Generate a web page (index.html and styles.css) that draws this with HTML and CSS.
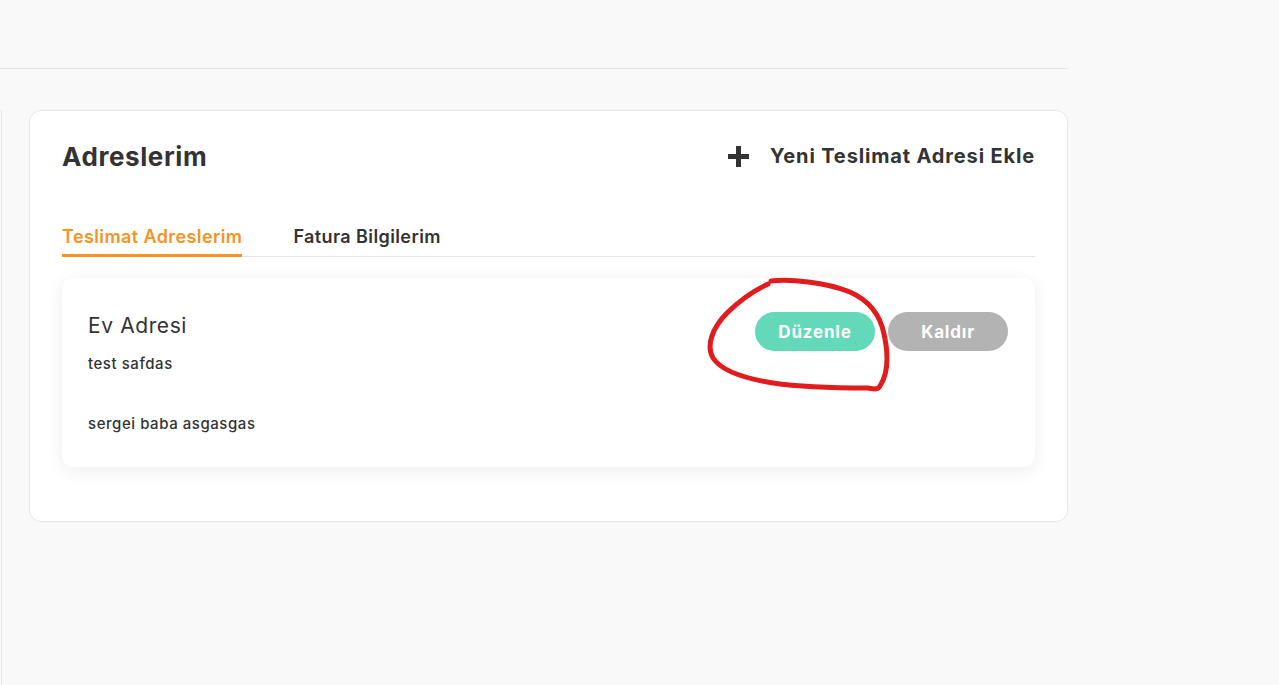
FILE: index.html
```html
<!DOCTYPE html>
<html lang="tr">
<head>
    <meta charset="utf-8">
    <link rel="stylesheet" href="styles.css">
    <title>Adreslerim</title>
</head>
<body>

<div class="topbar"></div>

<div class="layout">
    <aside class="side"></aside>

    <section class="card">
        <div class="card-head">
            <h1>Adreslerim</h1>
            <a class="add-link" href="#">
                <span class="plus"></span>
                Yeni Teslimat Adresi Ekle
            </a>
        </div>

        <div class="tabs">
            <a class="tab active" href="#">Teslimat Adreslerim</a>
            <a class="tab" href="#">Fatura Bilgilerim</a>
        </div>

        <div class="address">
            <div class="address-info">
                <h2>Ev Adresi</h2>
                <p>test safdas</p>
                <p class="owner">sergei baba asgasgas</p>
            </div>
            <div class="address-actions">
                <button class="btn btn-edit">Düzenle</button>
                <button class="btn btn-remove">Kaldır</button>
            </div>
        </div>
    </section>
</div>

<!-- kalem ile çizilmiş işaret -->
<svg class="mark" width="200" height="130" viewBox="700 270 200 130">
    <path d="M771 281 C 790 279, 825 282, 850 292 C 868 300, 880 314, 884 334
             C 888 352, 889 372, 880 386 C 878 390, 874 389, 868 388
             C 840 388, 800 387, 773 383 C 748 379, 722 372, 713 358
             C 706 346, 712 328, 727 313 C 740 300, 755 290, 768 284"
          fill="none" stroke="#e21b1d" stroke-width="5" stroke-linecap="round" stroke-linejoin="round"/>
</svg>

</body>
</html>
```

FILE: styles.css
```css
* { margin: 0; padding: 0; box-sizing: border-box; }

html, body { height: 100%; }
body {
    background: #f9f9f9;
    font-family: "Inter", "Liberation Sans", sans-serif;
    color: #333;
    position: relative;
    overflow: hidden;
}

.topbar {
    width: 1068px;
    height: 69px;
    border-bottom: 1px solid #e4e4e4;
}

.layout {
    display: flex;
    gap: 27px;
    padding-top: 41px;
    height: calc(100% - 69px);
}

.side {
    width: 2px;
    background: #fbfbfb;
    border-right: 1px solid #e6e6e6;
    border-top: 1px solid #e6e6e6;
    border-top-right-radius: 10px;
}

.card {
    width: 1039px;
    height: 412px;
    background: #fff;
    border: 1px solid #e8e8e8;
    border-radius: 12px;
    padding: 29px 32px 0 32px;
}

.card-head {
    display: flex;
    justify-content: space-between;
    align-items: center;
    height: 32px;
}
.card-head h1 {
    font-size: 26px;
    font-weight: 700;
    color: #333;
    letter-spacing: 0.6px;
}
.add-link {
    display: flex;
    align-items: center;
    gap: 21px;
    font-size: 20px;
    font-weight: 700;
    letter-spacing: 0.85px;
    color: #333;
    text-decoration: none;
}
.plus {
    position: relative;
    width: 21px;
    height: 21px;
}
.plus::before, .plus::after {
    content: "";
    position: absolute;
    background: #333;
}
.plus::before { left: 0; right: 0; top: 8px; height: 5px; }
.plus::after { top: 0; bottom: 0; left: 8px; width: 5px; }

.tabs {
    display: flex;
    gap: 51px;
    margin-top: 54px;
    border-bottom: 1px solid #e6e6e6;
}
.tab {
    font-size: 18px;
    font-weight: 600;
    letter-spacing: 0.4px;
    color: #333;
    text-decoration: none;
    padding: 0 0 7px 0;
    margin-bottom: -1px;
    border-bottom: 3px solid transparent;
}
.tab.active {
    color: #f7931e;
    border-bottom-color: #f7931e;
}

.address {
    display: flex;
    justify-content: space-between;
    align-items: flex-start;
    margin-top: 21px;
    height: 189px;
    background: #fff;
    border-radius: 12px;
    box-shadow: 0 4px 18px rgba(0, 0, 0, 0.07);
    padding: 35px 27px 0 26px;
}
.address h2 {
    font-size: 21px;
    font-weight: 400;
    letter-spacing: 0.6px;
    color: #333;
}
.address p {
    font-size: 15px;
    font-weight: 500;
    letter-spacing: 0.55px;
    margin-top: 16px;
}
.address p.owner { margin-top: 41px; }

.address-actions {
    display: flex;
    gap: 13px;
    margin-top: -1px;
}
.btn {
    width: 120px;
    height: 39px;
    border: none;
    border-radius: 20px;
    color: #fff;
    font-family: inherit;
    font-size: 17px;
    font-weight: 700;
    letter-spacing: 0.8px;
}
.btn-edit { background: #63d9b9; }
.btn-remove { background: #b3b3b3; }

.mark {
    position: absolute;
    left: 700px;
    top: 270px;
}
```
